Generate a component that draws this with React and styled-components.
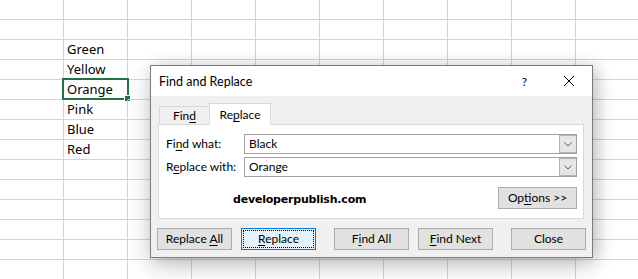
import React from 'react';
import styled, { createGlobalStyle } from 'styled-components';

const Global = createGlobalStyle`
  html, body { margin: 0; padding: 0; background: #fff; }
  body { width: 638px; height: 279px; overflow: hidden; }
  #root { position: relative; width: 638px; height: 279px; overflow: hidden; }
`;

const Sheet = styled.div`
  display: grid;
  grid-template-columns: repeat(10, 64px);
  grid-auto-rows: 20px;
  font-family: "Noto Sans", sans-serif;
  font-size: 13px;
  color: #000;
`;

const Cell = styled.div`
  position: relative;
  box-sizing: border-box;
  border-right: 1px solid #d4d4d4;
  border-bottom: 1px solid #d4d4d4;
  padding-left: 3px;
  line-height: 19px;
  white-space: nowrap;
`;

const Selection = styled.div`
  position: absolute;
  left: -2px;
  top: -2px;
  right: -2px;
  bottom: -1px;
  border: 2px solid #217346;
`;

const Handle = styled.div`
  position: absolute;
  right: -4px;
  bottom: -4px;
  width: 5px;
  height: 5px;
  background: #217346;
  border: 1px solid #fff;
`;

const Dialog = styled.div`
  position: absolute;
  left: 150px;
  top: 65px;
  width: 443px;
  height: 193px;
  box-sizing: border-box;
  border: 1px solid #7a7a7a;
  background: #f0f0f0;
  box-shadow: 0 8px 22px rgba(0, 0, 0, 0.22), 5px 0 14px rgba(0, 0, 0, 0.12);
  display: flex;
  flex-direction: column;
  font-family: Lato, "Noto Sans", sans-serif;
  font-size: 12px;
  color: #000;
`;

const TitleBar = styled.div`
  height: 30px;
  flex: none;
  background: #fff;
  display: flex;
  align-items: center;
  padding-left: 8px;
`;

const Title = styled.div`
  flex: 1;
  line-height: 15px;
  font-size: 12.5px;
`;

const TitleButton = styled.div`
  width: 46px;
  height: 30px;
  display: flex;
  align-items: center;
  justify-content: center;
  font-size: 12px;
  padding-left: ${p => p.$pl || 0}px;
  box-sizing: border-box;
`;

const Body = styled.div`
  flex: 1;
  display: flex;
  flex-direction: column;
  padding: 7px 8px 0 7px;
`;

const TabStrip = styled.div`
  height: 22px;
  margin-bottom: -1px;
  display: flex;
  align-items: flex-end;
  position: relative;
  z-index: 1;
`;

const Tab = styled.div`
  box-sizing: border-box;
  height: ${p => (p.$active ? 22 : 18)}px;
  margin-left: ${p => (p.$active ? 0 : 1)}px;
  margin-bottom: ${p => (p.$active ? 0 : 1)}px;
  width: ${p => p.$w}px;
  border: 1px solid #d9d9d9;
  border-bottom: none;
  border-right: ${p => (p.$active ? '1px solid #d9d9d9' : 'none')};
  background: ${p => (p.$active ? '#fff' : '#f0f0f0')};
  text-align: center;
  padding-top: ${p => (p.$active ? 3 : 1)}px;
  line-height: 15px;
`;

const Panel = styled.div`
  box-sizing: border-box;
  height: 95px;
  border: 1px solid #d9d9d9;
  background: #fff;
  padding: 9px 5px 0 7px;
  display: flex;
  flex-direction: column;
`;

const FieldGrid = styled.div`
  display: grid;
  grid-template-columns: 78px 333px;
  grid-auto-rows: 20px;
  row-gap: 3px;
`;

const Label = styled.div`
  line-height: 20px;
  white-space: nowrap;
`;

const Combo = styled.div`
  box-sizing: border-box;
  height: 20px;
  border: 1px solid #a0a0a0;
  display: flex;
  background: #fff;
`;

const ComboText = styled.div`
  flex: 1;
  padding-left: 4px;
  line-height: 18px;
`;

const DropButton = styled.div`
  box-sizing: border-box;
  width: 17px;
  background: #e6e6e6;
  border: 1px solid #b4b4b4;
  border-right: none;
  display: flex;
  align-items: center;
  justify-content: center;
`;

const OptionsRow = styled.div`
  margin-top: 10px;
  display: flex;
  align-items: flex-start;
  padding-right: 1px;
`;

const Brand = styled.div`
  margin-left: 67px;
  padding-top: 6px;
  font-family: "DejaVu Sans", sans-serif;
  font-weight: bold;
  font-size: 11px;
  letter-spacing: -0.2px;
  line-height: 13px;
`;

const Button = styled.div`
  position: relative;
  flex: none;
  box-sizing: border-box;
  width: ${p => p.$w || 75}px;
  height: 22px;
  margin-left: ${p => p.$ml || 0}px;
  border: 1px solid ${p => (p.$default ? '#0078d7' : '#adadad')};
  background: ${p => (p.$default ? '#e5f1fb' : '#e1e1e1')};
  text-align: center;
  line-height: 20px;
  white-space: nowrap;
  ${p =>
    p.$default &&
    `&::after {
      content: '';
      position: absolute;
      inset: 1px 1px 1px 1px;
      border: 1px dotted #000;
    }`}
`;

const OptionsButton = styled(Button)`
  margin-left: auto;
`;

const ButtonRow = styled.div`
  display: flex;
  margin: 9px -3px 0 -1px;
`;

const U = styled.span`
  text-decoration: underline;
  text-underline-offset: 2px;
`;

const cols = 10;
const rows = 14;
const data = { 2: 'Green', 3: 'Yellow', 4: 'Orange', 5: 'Pink', 6: 'Blue', 7: 'Red' };

function Chevron() {
  return (
    <svg width="8" height="5" viewBox="0 0 8 5">
      <polyline points="0.5,0.5 4,4 7.5,0.5" fill="none" stroke="#5a5a5a" strokeWidth="1" />
    </svg>
  );
}

function CloseIcon() {
  return (
    <svg width="10" height="10" viewBox="0 0 10 10">
      <line x1="0" y1="0" x2="10" y2="10" stroke="#000" strokeWidth="1" />
      <line x1="10" y1="0" x2="0" y2="10" stroke="#000" strokeWidth="1" />
    </svg>
  );
}

export default function App() {
  const cells = [];
  for (let r = 0; r < rows; r++) {
    for (let c = 0; c < cols; c++) {
      const text = c === 1 ? data[r] || '' : '';
      const selected = c === 1 && r === 4;
      cells.push(
        <Cell key={`${r}-${c}`}>
          {text}
          {selected && (
            <Selection>
              <Handle />
            </Selection>
          )}
        </Cell>
      );
    }
  }
  return (
    <>
      <Global />
      <Sheet>{cells}</Sheet>
      <Dialog>
        <TitleBar>
          <Title>Find and Replace</Title>
          <TitleButton $pl={3}>?</TitleButton>
          <TitleButton>
            <CloseIcon />
          </TitleButton>
        </TitleBar>
        <Body>
          <TabStrip>
            <Tab $w={50}>
              Fin<U>d</U>
            </Tab>
            <Tab $active $w={62}>
              Re<U>p</U>lace
            </Tab>
          </TabStrip>
          <Panel>
            <FieldGrid>
              <Label>
                Fi<U>n</U>d what:
              </Label>
              <Combo>
                <ComboText>Black</ComboText>
                <DropButton>
                  <Chevron />
                </DropButton>
              </Combo>
              <Label>
                R<U>e</U>place with:
              </Label>
              <Combo>
                <ComboText>Orange</ComboText>
                <DropButton>
                  <Chevron />
                </DropButton>
              </Combo>
            </FieldGrid>
            <OptionsRow>
              <Brand>developerpublish.com</Brand>
              <OptionsButton $w={79}>
                Op<U>t</U>ions &gt;&gt;
              </OptionsButton>
            </OptionsRow>
          </Panel>
          <ButtonRow>
            <Button>
              Replace <U>A</U>ll
            </Button>
            <Button $default $ml={9}>
              <U>R</U>eplace
            </Button>
            <Button $ml={18}>
              F<U>i</U>nd All
            </Button>
            <Button $ml={9}>
              <U>F</U>ind Next
            </Button>
            <Button $ml={18}>Close</Button>
          </ButtonRow>
        </Body>
      </Dialog>
    </>
  );
}
